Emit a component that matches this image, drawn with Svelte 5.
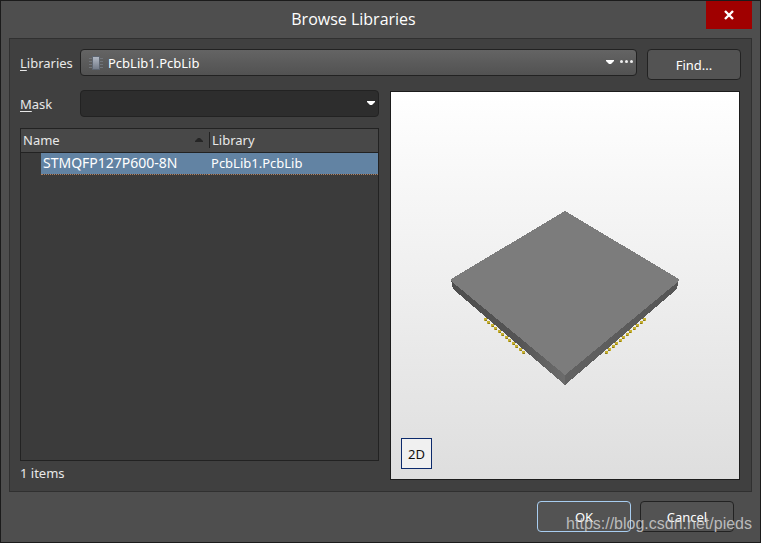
<script>
  let library = $state('PcbLib1.PcbLib');
  let mask = $state('');
  const items = [{ name: 'STMQFP127P600-8N', library: 'PcbLib1.PcbLib' }];
  const pins = Array.from({ length: 12 }, (_, i) => ({
    left: 34 + Math.round(i * 3.45),
    right: 193 - Math.round(i * 3.45),
    y: 107 + i * 3
  }));
</script>

<main class="dialog">
  <header class="titlebar">
    <h1>Browse Libraries</h1>
    <button class="close" aria-label="Close">
      <svg width="10" height="10" viewBox="0 0 10 10"><path d="M1 1 9 9M9 1 1 9" stroke="#fff" stroke-width="2.4" /></svg>
    </button>
  </header>

  <section class="panel">
    <div class="source">
      <label for="library"><u>L</u>ibraries</label>
      <div class="combo raised">
        <select id="library" bind:value={library}>
          <option>PcbLib1.PcbLib</option>
        </select>
        <svg class="chip" width="14" height="14" viewBox="0 0 14 14">
          <path d="M0 2.5h14M0 5.5h14M0 8.5h14M0 11.5h14" stroke="#70747a" />
          <rect x="3" y="0" width="8" height="14" fill="#5d6570" />
          <rect x="4" y="1" width="6" height="12" fill="url(#body)" />
          <defs><linearGradient id="body" x2="0" y2="1"><stop stop-color="#b0b7c3" /><stop offset="1" stop-color="#747c89" /></linearGradient></defs>
        </svg>
        <svg class="arrow" width="8" height="4" viewBox="0 0 8 4"><path d="M0 0h8v1L5 4H3L0 1z" fill="#fff" /></svg>
        <button class="more" aria-label="More libraries">
          <svg width="13" height="3" viewBox="0 0 13 3"><circle cx="1.5" cy="1.5" r="1.5" fill="#eee" /><circle cx="6.5" cy="1.5" r="1.5" fill="#eee" /><circle cx="11.5" cy="1.5" r="1.5" fill="#eee" /></svg>
        </button>
      </div>
      <button class="btn find">Find...</button>
    </div>

    <div class="content">
      <div class="browser">
        <div class="mask">
          <label for="mask"><u>M</u>ask</label>
          <div class="combo sunken">
            <select id="mask" bind:value={mask}><option value=""></option></select>
            <svg class="arrow" width="8" height="4" viewBox="0 0 8 4"><path d="M0 0h8v1L5 4H3L0 1z" fill="#fff" /></svg>
          </div>
        </div>
        <div class="list">
          <table>
            <colgroup><col class="gutter" /><col class="name" /><col /></colgroup>
            <thead>
              <tr>
                <th colspan="2"><div class="head">Name<svg width="8" height="4" viewBox="0 0 8 4"><path d="M0 4V3L3 0h2l3 3v1z" fill="#252525" /></svg></div></th>
                <th><div class="head">Library</div></th>
              </tr>
            </thead>
            <tbody>
              {#each items as item}
                <tr><td class="blank"></td><td class="part">{item.name}</td><td>{item.library}</td></tr>
              {/each}
            </tbody>
          </table>
        </div>
        <p class="count">{items.length} items</p>
      </div>

      <div class="preview">
        <svg class="model" width="230" height="174" viewBox="0 0 230 174" shape-rendering="crispEdges" role="img" aria-label="3D package">
          <defs>
            <linearGradient id="sideL"><stop stop-color="#4d4d4d" /><stop offset=".6" stop-color="#555" /><stop offset="1" stop-color="#6c6c6c" /></linearGradient>
            <linearGradient id="sideR"><stop stop-color="#626262" /><stop offset="1" stop-color="#555" /></linearGradient>
          </defs>
          {#each pins as pin}
            <rect x={pin.left} y={pin.y} width="3" height="3" fill="#c6b02e" />
            <rect x={pin.left + 1} y={pin.y + 2} width="2" height="1" fill="#8a7822" />
            <rect x={pin.right} y={pin.y} width="3" height="3" fill="#c6b02e" />
            <rect x={pin.right} y={pin.y + 2} width="2" height="1" fill="#8a7822" />
          {/each}
          <path d="M1 68 115 162v12L3 78z" fill="url(#sideL)" />
          <path d="M229 68 115 162v12L227 78z" fill="url(#sideR)" />
          <path d="M115 0 229 68v2L115 164 1 70v-2z" fill="#7c7c7c" />
        </svg>
        <button class="mode">2D</button>
      </div>
    </div>
  </section>

  <footer>
    <button class="btn primary">OK</button>
    <button class="btn">Cancel</button>
  </footer>
  <span class="watermark">https://blog.csdn.net/pieds</span>
</main>

<style>
  :global(body) { margin: 0; }
  .dialog, .dialog * { box-sizing: border-box; }
  .dialog {
    position: relative;
    display: flex;
    flex-direction: column;
    min-height: 100vh;
    border: 1px solid #1b1b1b;
    background: #4e4e4e;
    color: #e8e8e8;
    font: 13px/20px "Noto Sans", sans-serif;
  }
  button, select { font: inherit; color: inherit; }
  button { padding: 0; border: 0; }
  .titlebar {
    display: flex;
    height: 37px;
    padding-right: 8px;
  }
  h1 {
    flex: 1;
    margin: 0;
    font: 400 16px/36px "Open Sans", sans-serif;
    text-align: center;
    color: #fff;
  }
  .close {
    display: grid;
    place-items: center;
    width: 46px;
    height: 28px;
    background: #a00000;
  }
  .panel {
    flex: 1;
    display: flex;
    flex-direction: column;
    margin: 0 8px;
    padding: 10px;
    border: 1px solid #303030;
    background: #404040;
  }
  .source { display: flex; align-items: flex-start; }
  label { width: 60px; flex: none; line-height: 28px; }
  u { text-underline-offset: 2px; }
  .combo {
    position: relative;
    flex: 1;
    height: 27px;
    border: 1px solid #222;
    border-radius: 4px;
  }
  .raised { background: linear-gradient(#646464, #525252); }
  .sunken { background: #2d2d2d; }
  .combo select {
    display: block;
    width: 100%;
    height: 100%;
    padding: 0 40px 0 27px;
    border: 0;
    background: none;
    appearance: none;
    color: #fff;
  }
  .chip { position: absolute; left: 8px; top: 6px; }
  .arrow { position: absolute; right: 3px; top: 10px; pointer-events: none; }
  .raised .arrow { right: 22px; }
  .more {
    position: absolute;
    right: 3px;
    top: 0;
    display: grid;
    place-items: center;
    height: 23px;
    background: none;
  }
  .btn {
    width: 94px;
    height: 31px;
    border: 1px solid #222;
    border-radius: 4px;
    background: #535353;
    color: #fff;
  }
  .find { margin-left: 10px; }
  .content {
    flex: 1;
    display: grid;
    grid-template-columns: 359fr 351fr;
    gap: 11px;
    margin-top: 10px;
  }
  .browser { display: flex; flex-direction: column; }
  .mask { display: flex; }
  .list {
    flex: 1;
    margin-top: 10px;
    border: 1px solid #222;
    background: #3b3b3b;
  }
  table { width: 100%; border-collapse: collapse; table-layout: fixed; }
  .gutter { width: 20px; }
  .name { width: 168px; }
  th {
    height: 23px;
    padding: 0;
    border-bottom: 1px solid #222;
    background: #484848;
    font-weight: 400;
    text-align: left;
  }
  .head {
    display: flex;
    align-items: center;
    justify-content: space-between;
    height: 16px;
    padding: 0 6px 0 2px;
  }
  th + th .head { border-left: 1px solid #222; }
  td {
    height: 22px;
    padding: 0 2px;
    border-bottom: 1px dotted #b08060;
    background: #6283a3;
    color: #fff;
  }
  .part { font-size: 14px; }
  td.blank { background: none; border: 0; }
  .count { margin: 4px 0 0; line-height: 16px; }
  .preview {
    position: relative;
    display: grid;
    place-items: center;
    margin: 1px 1px 1px 0;
    border: 1px solid #1c1c1c;
    background: linear-gradient(#fff, #dedede);
  }
  .model { margin-top: 24px; }
  .mode {
    position: absolute;
    left: 10px;
    bottom: 10px;
    width: 31px;
    height: 31px;
    border: 1px solid #0c2a6c;
    background: #f0f0f0;
    color: #111;
  }
  footer {
    display: flex;
    justify-content: flex-end;
    gap: 9px;
    padding: 9px 26px 10px;
  }
  .primary { border-color: #a8cdf0; }
  .watermark {
    position: absolute;
    right: 8px;
    bottom: 8px;
    color: rgba(215, 215, 215, .8);
    font: 16px/20px "Liberation Sans", sans-serif;
    pointer-events: none;
  }
</style>
